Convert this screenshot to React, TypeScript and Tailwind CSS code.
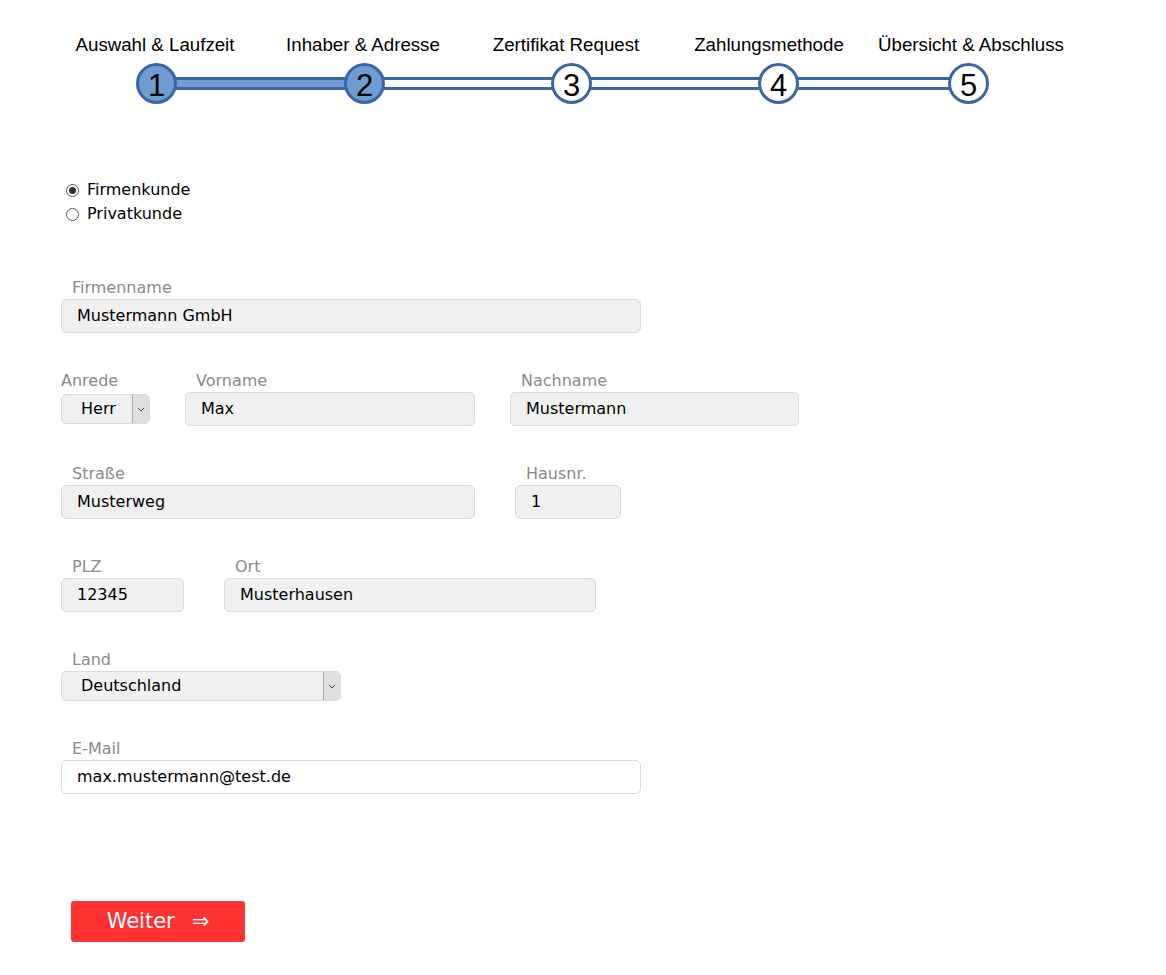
import React from 'react';

const steps = [
  { label: 'Auswahl & Laufzeit', ml: 'ml-[55px]' },
  { label: 'Inhaber & Adresse', ml: 'ml-[8px]' },
  { label: 'Zertifikat Request', ml: 'ml-[3px]' },
  { label: 'Zahlungsmethode', ml: 'ml-[3px]' },
  { label: 'Übersicht & Abschluss', ml: 'ml-[2px]' },
];

const font = "font-['DejaVu_Sans',Verdana,sans-serif]";

function StepCircle({ n, active }: { n: number; active?: boolean }) {
  return (
    <div
      className={`relative z-10 flex h-[41px] w-[41px] shrink-0 items-center justify-center rounded-full border-[3px] border-[#3a66a5] text-[31px] leading-none text-black ${
        active ? 'bg-[#6f9dd1]' : 'bg-white'
      }`}
    >
      <span className="mt-[3px]">{n}</span>
    </div>
  );
}

function Bar({ w, done }: { w: string; done?: boolean }) {
  return (
    <div
      className={`-mx-[2px] h-[13px] border-y-[3px] border-[#3a66a5] ${w} ${done ? 'bg-[#6f9dd1]' : 'bg-white'}`}
    />
  );
}

function Radio({ checked, label }: { checked?: boolean; label: string }) {
  return (
    <div className="flex h-[24px] items-center">
      <div className="ml-[5px] flex h-[13px] w-[13px] items-center justify-center rounded-full border border-[#555] bg-white">
        {checked && <div className="h-[7px] w-[7px] rounded-full bg-[#333]" />}
      </div>
      <span className="ml-[8px] text-[16px] text-black">{label}</span>
    </div>
  );
}

function Label({ children, indent = true }: { children: React.ReactNode; indent?: boolean }) {
  return (
    <div className={`h-[20px] text-[16px] leading-[20px] text-[#8a8a8a] ${indent ? 'pl-[11px]' : ''}`}>{children}</div>
  );
}

function Field({ w, value, white }: { w: string; value: string; white?: boolean }) {
  return (
    <div
      className={`flex h-[34px] items-center rounded-[5px] border border-[#dadada] pl-[15px] text-[16px] text-black ${w} ${
        white ? 'bg-white' : 'bg-[#f0f0f0]'
      }`}
    >
      {value}
    </div>
  );
}

function Select({ w, value }: { w: string; value: string }) {
  return (
    <div
      className={`flex h-[30px] items-center justify-between rounded-[5px] border border-[#dadada] bg-[#f0f0f0] pl-[19px] text-[16px] text-black ${w}`}
    >
      <span>{value}</span>
      <div className="flex h-[28px] w-[17px] items-center justify-center rounded-r-[4px] border-l border-[#a9a9a9] bg-[#dfdfdf]">
        <svg width="8" height="5" viewBox="0 0 8 5" fill="none">
          <path d="M1 1l3 3 3-3" stroke="#444" strokeWidth="1" />
        </svg>
      </div>
    </div>
  );
}

export default function App() {
  return (
    <div className={`min-h-[975px] w-[1166px] bg-white ${font}`}>
      {/* Progress steps */}
      <div className="pt-[34px] font-['Liberation_Sans',Arial,sans-serif]">
        <div className="flex">
          {steps.map((s) => (
            <div key={s.label} className={`w-[200px] text-center text-[18.7px] leading-[22px] text-black ${s.ml}`}>
              {s.label}
            </div>
          ))}
        </div>
        <div className="ml-[136px] mt-[7px] flex items-center">
          <StepCircle n={1} active />
          <Bar w="w-[171px]" done />
          <StepCircle n={2} active />
          <Bar w="w-[170px]" />
          <StepCircle n={3} />
          <Bar w="w-[170px]" />
          <StepCircle n={4} />
          <Bar w="w-[153px]" />
          <StepCircle n={5} />
        </div>
      </div>

      {/* Form */}
      <div className="pl-[61px]">
        <div className="mt-[74px]">
          <Radio checked label="Firmenkunde" />
          <Radio label="Privatkunde" />
        </div>

        <div className="mt-[52px]">
          <Label>Firmenname</Label>
          <div className="mt-[1px]">
            <Field w="w-[580px]" value="Mustermann GmbH" />
          </div>
        </div>

        <div className="mt-[38px] flex">
          <div>
            <Label indent={false}>Anrede</Label>
            <div className="mt-[3px]">
              <Select w="w-[89px]" value="Herr" />
            </div>
          </div>
          <div className="ml-[35px]">
            <Label>Vorname</Label>
            <div className="mt-[1px]">
              <Field w="w-[290px]" value="Max" />
            </div>
          </div>
          <div className="ml-[35px]">
            <Label>Nachname</Label>
            <div className="mt-[1px]">
              <Field w="w-[289px]" value="Mustermann" />
            </div>
          </div>
        </div>

        <div className="mt-[38px] flex">
          <div>
            <Label>Straße</Label>
            <div className="mt-[1px]">
              <Field w="w-[414px]" value="Musterweg" />
            </div>
          </div>
          <div className="ml-[40px]">
            <Label>Hausnr.</Label>
            <div className="mt-[1px]">
              <Field w="w-[106px]" value="1" />
            </div>
          </div>
        </div>

        <div className="mt-[38px] flex">
          <div>
            <Label>PLZ</Label>
            <div className="mt-[1px]">
              <Field w="w-[123px]" value="12345" />
            </div>
          </div>
          <div className="ml-[40px]">
            <Label>Ort</Label>
            <div className="mt-[1px]">
              <Field w="w-[372px]" value="Musterhausen" />
            </div>
          </div>
        </div>

        <div className="mt-[38px]">
          <Label>Land</Label>
          <div className="mt-[1px]">
            <Select w="w-[280px]" value="Deutschland" />
          </div>
        </div>

        <div className="mt-[38px]">
          <Label>E-Mail</Label>
          <div className="mt-[1px]">
            <Field w="w-[580px]" value="max.mustermann@test.de" white />
          </div>
        </div>

        <button className="ml-[10px] mt-[107px] flex h-[41px] w-[174px] items-center justify-center gap-[17px] rounded-[3px] bg-[#fe3232] text-[21px] text-white">
          <span>Weiter</span>
          <span>⇒</span>
        </button>
      </div>
    </div>
  );
}
